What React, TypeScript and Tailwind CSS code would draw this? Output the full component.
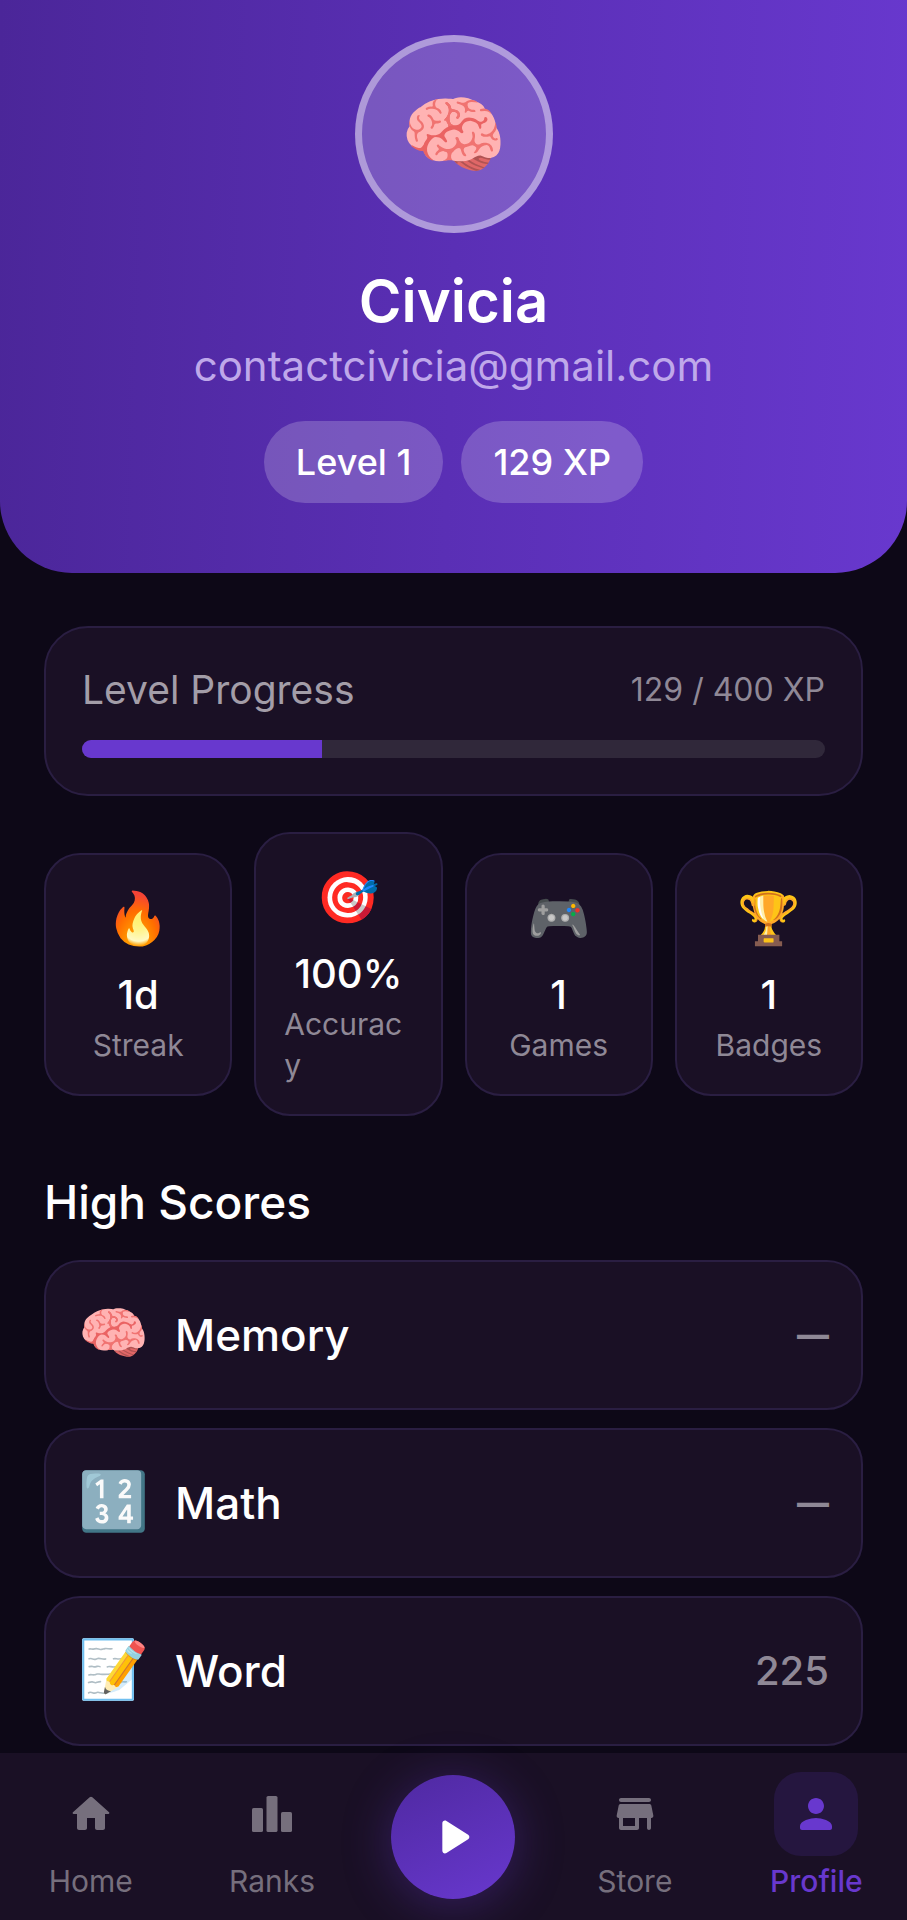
import React from 'react'
import clsx from 'clsx'

const stats = [
  { icon: '🔥', value: '1d', label: 'Streak' },
  { icon: '🎯', value: '100%', label: 'Accuracy' },
  { icon: '🎮', value: '1', label: 'Games' },
  { icon: '🏆', value: '1', label: 'Badges' },
]

const highScores = [
  { icon: '🧠', name: 'Memory', score: null },
  { icon: '🔢', name: 'Math', score: null },
  { icon: '📝', name: 'Word', score: 225 },
]

const xp = 129
const nextLevelXp = 400

const HomeIcon = () => (
  <svg viewBox="0 0 24 24" className="size-12" fill="currentColor" aria-hidden="true">
    <path d="M10 19v-5h4v5c0 .55.45 1 1 1h3c.55 0 1-.45 1-1v-7h1.7c.46 0 .68-.57.33-.87L12.67 3.6c-.38-.34-.96-.34-1.34 0l-8.36 7.53c-.34.3-.13.87.33.87H5v7c0 .55.45 1 1 1h3c.55 0 1-.45 1-1z" />
  </svg>
)

const RanksIcon = () => (
  <svg viewBox="0 0 24 24" className="size-12" fill="currentColor" aria-hidden="true">
    <rect x="2" y="9" width="5.5" height="12" rx="0.8" />
    <rect x="9.25" y="3" width="5.5" height="18" rx="0.8" />
    <rect x="16.5" y="11" width="5.5" height="10" rx="0.8" />
  </svg>
)

const StoreIcon = () => (
  <svg viewBox="0 0 24 24" className="size-12" fill="currentColor" aria-hidden="true">
    <path d="M5 6h14c.55 0 1-.45 1-1s-.45-1-1-1H5c-.55 0-1 .45-1 1s.45 1 1 1zm15.16 1.8c-.09-.46-.5-.8-.98-.8H4.82c-.48 0-.89.34-.98.8l-1 5c-.12.62.35 1.2.98 1.2H4v5c0 .55.45 1 1 1h8c.55 0 1-.45 1-1v-5h4v5c0 .55.45 1 1 1s1-.45 1-1v-5h.18c.63 0 1.1-.58.98-1.2l-1-5zM12 18H6v-4h6v4z" />
  </svg>
)

const ProfileIcon = () => (
  <svg viewBox="0 0 24 24" className="size-12" fill="currentColor" aria-hidden="true">
    <path d="M12 12c2.21 0 4-1.79 4-4s-1.79-4-4-4-4 1.79-4 4 1.79 4 4 4zm0 2c-2.67 0-8 1.34-8 4v1c0 .55.45 1 1 1h14c.55 0 1-.45 1-1v-1c0-2.66-5.33-4-8-4z" />
  </svg>
)

const ProfileHeader = () => (
  <header className="flex flex-col items-center rounded-b-[72px] bg-linear-[92deg,#4b2699_0%,#5a2fb5_50%,#6838ce_100%] px-11 pt-[35px] pb-[70px]">
    <div className="flex size-[198px] items-center justify-center rounded-full border-[7px] border-white/40 bg-white/20 text-[86px] leading-none">
      <span role="img" aria-label="Avatar">🧠</span>
    </div>
    <h1 className="mt-8 text-[58px] leading-[72px] font-semibold text-white">Civicia</h1>
    <p className="mt-1 text-[42px] leading-[50px] text-[#bfa8ea]">contactcivicia@gmail.com</p>
    <div className="mt-[30px] flex gap-[18px]">
      <span className="rounded-full bg-white/20 px-8 text-[36px] leading-[82px] font-medium text-white">Level 1</span>
      <span className="rounded-full bg-white/20 px-8 text-[36px] leading-[82px] font-medium text-white">{xp} XP</span>
    </div>
  </header>
)

const LevelProgress = () => (
  <section className="rounded-[44px] border-2 border-[#2a1e42] bg-[#1a1025] px-9 py-9">
    <div className="flex items-center justify-between">
      <h2 className="text-[39px] leading-[52px] text-[#a39da8]">Level Progress</h2>
      <span className="text-[32px] leading-[52px] text-[#8f8896]">{xp} / {nextLevelXp} XP</span>
    </div>
    <div
      className="mt-6 h-[18px] overflow-hidden rounded-full bg-[#30283a]"
      role="progressbar"
      aria-label="Level Progress"
      aria-valuenow={xp}
      aria-valuemax={nextLevelXp}
    >
      <div className="h-full bg-[#6838ce]" style={{ width: `${(xp / nextLevelXp) * 100}%` }} />
    </div>
  </section>
)

const navItems = [
  { label: 'Home', Icon: HomeIcon },
  { label: 'Ranks', Icon: RanksIcon },
  { label: 'Play', Icon: null },
  { label: 'Store', Icon: StoreIcon },
  { label: 'Profile', Icon: ProfileIcon },
]

const BottomNav = ({ active }: { active: string }) => (
  <nav
    className="sticky bottom-0 mt-1.5 grid grid-cols-5 items-center bg-[#1a1025] pt-[19px] pb-[18px]"
    aria-label="Main"
  >
    {navItems.map(({ label, Icon }) =>
      Icon ? (
        <a
          key={label}
          href={`#${label.toLowerCase()}`}
          className={clsx('flex flex-col items-center gap-1', active === label ? 'text-[#6838ce]' : 'text-[#766f7d]')}
          aria-current={active === label ? 'page' : undefined}
        >
          <span className={clsx('flex size-[84px] items-center justify-center rounded-[27px]', active === label && 'bg-[#25163f]')}>
            <Icon />
          </span>
          <span className={clsx('text-[30px] leading-[42px]', active === label && 'font-medium')}>{label}</span>
        </a>
      ) : (
        <button
          key={label}
          type="button"
          aria-label={label}
          className="flex size-[124px] items-center justify-center justify-self-center rounded-full bg-linear-[155deg,#4f29a1,#6838ce] text-white shadow-[0_6px_48px_rgba(104,56,206,0.35)]"
        >
          <svg viewBox="0 0 24 24" className="size-16" fill="currentColor" aria-hidden="true">
            <path d="M8 6.82v10.36c0 .79.87 1.27 1.54.84l8.14-5.18c.62-.39.62-1.29 0-1.69L9.54 5.98C8.87 5.55 8 6.03 8 6.82z" />
          </svg>
        </button>
      )
    )}
  </nav>
)

const App = () => {
  return (
    <div className="flex min-h-screen flex-col bg-[#0d0817] font-['Inter',sans-serif]">
      <ProfileHeader />

      <main className="flex-1 px-11 pt-[53px]">
        <LevelProgress />

        <section className="mt-9 grid grid-cols-4 items-center gap-[22px]" aria-label="Stats">
          {stats.map((stat) => (
            <div
              key={stat.label}
              className="flex flex-col items-center rounded-[36px] border-2 border-[#2a1e42] bg-[#1a1025] px-7 py-7"
            >
              <span className="text-[51px] leading-[70px]" aria-hidden="true">{stat.icon}</span>
              <span className="mt-3 text-[40px] leading-[60px] font-medium text-white">{stat.value}</span>
              <span className="text-[30px] leading-[41px] wrap-anywhere text-[#8f8896]">{stat.label}</span>
            </div>
          ))}
        </section>

        <h2 className="mt-14 text-[46px] leading-[60px] font-medium text-white">High Scores</h2>
        <ul className="mt-7 flex flex-col gap-[18px]">
          {highScores.map((game) => (
            <li
              key={game.name}
              className="flex h-[150px] items-center rounded-[36px] border-2 border-[#2a1e42] bg-[#1a1025] px-8"
            >
              <span className="pb-1 text-[57px] leading-[72px]" aria-hidden="true">{game.icon}</span>
              <span className="ml-[26px] flex-1 text-[44px] leading-[60px] font-medium text-white">{game.name}</span>
              {game.score === null ? (
                <span className="text-[32px] leading-[60px] font-extrabold text-[#8f8896]">—</span>
              ) : (
                <span className="text-[40px] leading-[60px] font-medium text-[#8f8896]">{game.score}</span>
              )}
            </li>
          ))}
        </ul>
      </main>

      <BottomNav active="Profile" />
    </div>
  )
}

export default App
